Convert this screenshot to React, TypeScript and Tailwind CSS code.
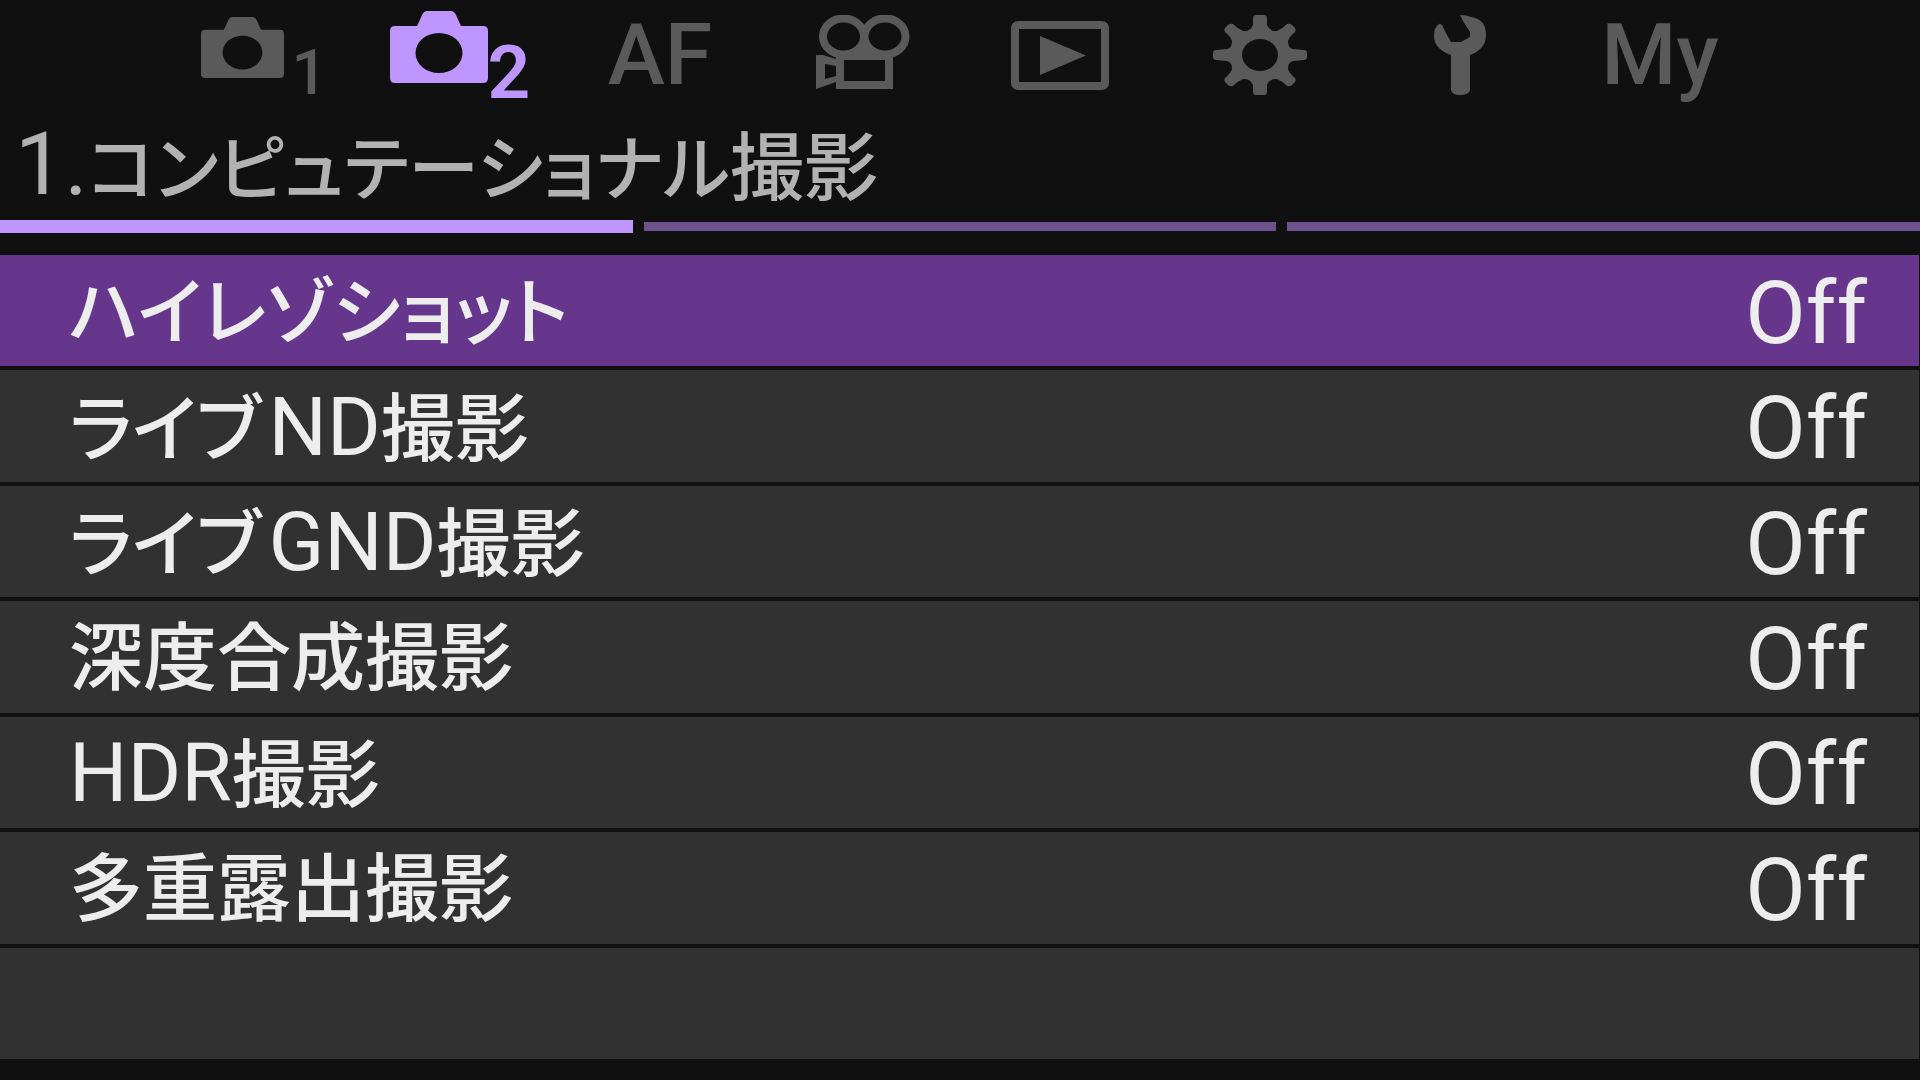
import clsx from "clsx";
import type { ReactNode } from "react";

const GEAR_QUARTER =
  "M47 0h4q3 0 3 3V10Q57 17 64 16Q69 14 74 9Q78 8 80 11Q84 14 82 17Q76 22 75 26Q75 33 80 34L91 35Q94 35 94 38V40H47Z";

function CameraIcon({ className }: { className: string }) {
  return (
    <svg viewBox="0 0 98 72" className={className} fill="currentColor" aria-hidden="true">
      <path
        fillRule="evenodd"
        d="M27 15Q29 11 32 4Q34 0 37 0H61Q64 0 66 4Q69 11 71 15H93Q98 15 98 20V67Q98 72 93 72H5Q0 72 0 67V20Q0 15 5 15ZM49 22A23.5 20 0 1 0 49 62A23.5 20 0 1 0 49 22Z"
      />
    </svg>
  );
}

function MovieIcon() {
  return (
    <svg viewBox="-6 0 100 80" className="h-20 w-[100px]" fill="currentColor" aria-hidden="true">
      <g fill="none" stroke="currentColor" strokeWidth="8">
        <ellipse cx="27.5" cy="21.5" rx="20.5" ry="18" />
        <ellipse cx="69" cy="21.5" rx="20.5" ry="18" />
        <path d="M24 41H73V70H24Z" />
      </g>
      <path d="M34 42L48 25L63 42Z" />
      <path fillRule="evenodd" d="M0 40H7L20 44V67L0 74ZM9 49V64L20 61V51Z" />
    </svg>
  );
}

function PlayIcon() {
  return (
    <svg viewBox="0 0 98 69" className="h-[69px] w-[98px]" aria-hidden="true">
      <rect x="4" y="4" width="90" height="61" rx="3" fill="none" stroke="currentColor" strokeWidth="8" />
      <path d="M29 15L75 34.5L29 54Z" fill="currentColor" />
    </svg>
  );
}

function GearIcon() {
  return (
    <svg viewBox="0 0 94 80" className="h-20 w-[94px]" fill="currentColor" aria-hidden="true">
      <path d={GEAR_QUARTER} />
      <path d={GEAR_QUARTER} transform="matrix(-1 0 0 1 94 0)" />
      <path d={GEAR_QUARTER} transform="matrix(1 0 0 -1 0 80)" />
      <path d={GEAR_QUARTER} transform="matrix(-1 0 0 -1 94 80)" />
      <ellipse cx="47" cy="40" rx="18" ry="16" fill="#101010" />
    </svg>
  );
}

function WrenchIcon() {
  return (
    <svg viewBox="0 0 54 80" className="h-20 w-[54px]" fill="currentColor" aria-hidden="true">
      <path d="M6 9Q1 12 1 21Q1 34 18 40V75Q19 80 27 80Q36 80 37 75V40Q53 34 53 20Q53 4 38 2Q33 0 27 0L30 6L37 17V22L28 27H18L14 20L9 10Q7 8 6 9Z" />
    </svg>
  );
}

type Tab = { name: string; content: ReactNode; active?: boolean };

const tabs: Tab[] = [
  {
    name: "Camera 1",
    content: (
      <>
        <CameraIcon className="mb-4 ml-2 h-[61px] w-[83px]" />
        <span className="ml-2 self-end text-[63px] leading-[75px]">1</span>
      </>
    ),
  },
  {
    name: "Camera 2",
    active: true,
    content: (
      <>
        <CameraIcon className="mb-4 h-[72px] w-[98px]" />
        <span className="self-end text-[75px] font-semibold leading-[75px]">2</span>
      </>
    ),
  },
  { name: "AF", content: <span className="text-[86px] leading-[88px]">AF</span> },
  { name: "Movie", content: <MovieIcon /> },
  { name: "Playback", content: <PlayIcon /> },
  { name: "Settings", content: <GearIcon /> },
  { name: "Setup", content: <WrenchIcon /> },
  { name: "My", content: <span className="text-[86px] leading-[88px]">My</span> },
];

const items = [
  { kana: "ハイレゾショット", value: "Off" },
  { kana: "ライブ", latin: "ND", kanji: "撮影", value: "Off" },
  { kana: "ライブ", latin: "GND", kanji: "撮影", value: "Off" },
  { kanji: "深度合成撮影", value: "Off" },
  { latin: "HDR", kanji: "撮影", value: "Off" },
  { kanji: "多重露出撮影", value: "Off" },
];

export default function App() {
  return (
    <div
      lang="ja"
      className="flex min-h-screen flex-col bg-[#101010] pb-[21px] font-['Roboto','Noto_Sans_CJK_JP',sans-serif] text-[74px] text-[#ededed]"
    >
      <nav className="grid h-[110px] grid-cols-8 px-40 font-medium">
        {tabs.map((tab) => (
          <button
            key={tab.name}
            type="button"
            aria-label={tab.name}
            aria-pressed={!!tab.active}
            className={clsx("flex items-center justify-center", tab.active ? "text-[#bf96ff]" : "text-[#5a5a5a]")}
          >
            {tab.content}
          </button>
        ))}
      </nav>

      <h1 className="flex h-[110px] items-baseline pl-[15px] leading-[108px] text-[#b2b2b2]">
        <span className="text-[88px]">1.</span>
        <span className="text-[71px] font-medium [font-feature-settings:'palt']">コンピュテーショナル</span>
        <span className="font-medium">撮影</span>
      </h1>

      <div className="grid h-[13px] grid-cols-3 items-center gap-[11px]">
        <div className="h-[13px] bg-[#bf96ff]" />
        <div className="h-[9px] bg-[#6d528d]" />
        <div className="h-[9px] bg-[#6d528d]" />
      </div>

      <ul className="mr-px mt-[22px] grid flex-1 grid-rows-7 gap-1">
        {items.map((item, i) => (
          <li key={i} className="flex">
            <button
              type="button"
              className={clsx(
                "flex flex-1 items-center justify-between pl-[69px] pr-[52px] leading-[100px]",
                i === 0 ? "bg-[#65368c]" : "bg-[#313131]"
              )}
            >
              <span className="flex items-baseline pt-1">
                {item.kana && (
                  <span className="mr-2 text-[73px] font-medium [font-feature-settings:'palt']">{item.kana}</span>
                )}
                {item.latin && <span className="text-[82px]">{item.latin}</span>}
                {item.kanji && <span className="font-medium">{item.kanji}</span>}
              </span>
              <span className="pt-1 text-[88px]">{item.value}</span>
            </button>
          </li>
        ))}
        <li className="bg-[#313131]" />
      </ul>
    </div>
  );
}
